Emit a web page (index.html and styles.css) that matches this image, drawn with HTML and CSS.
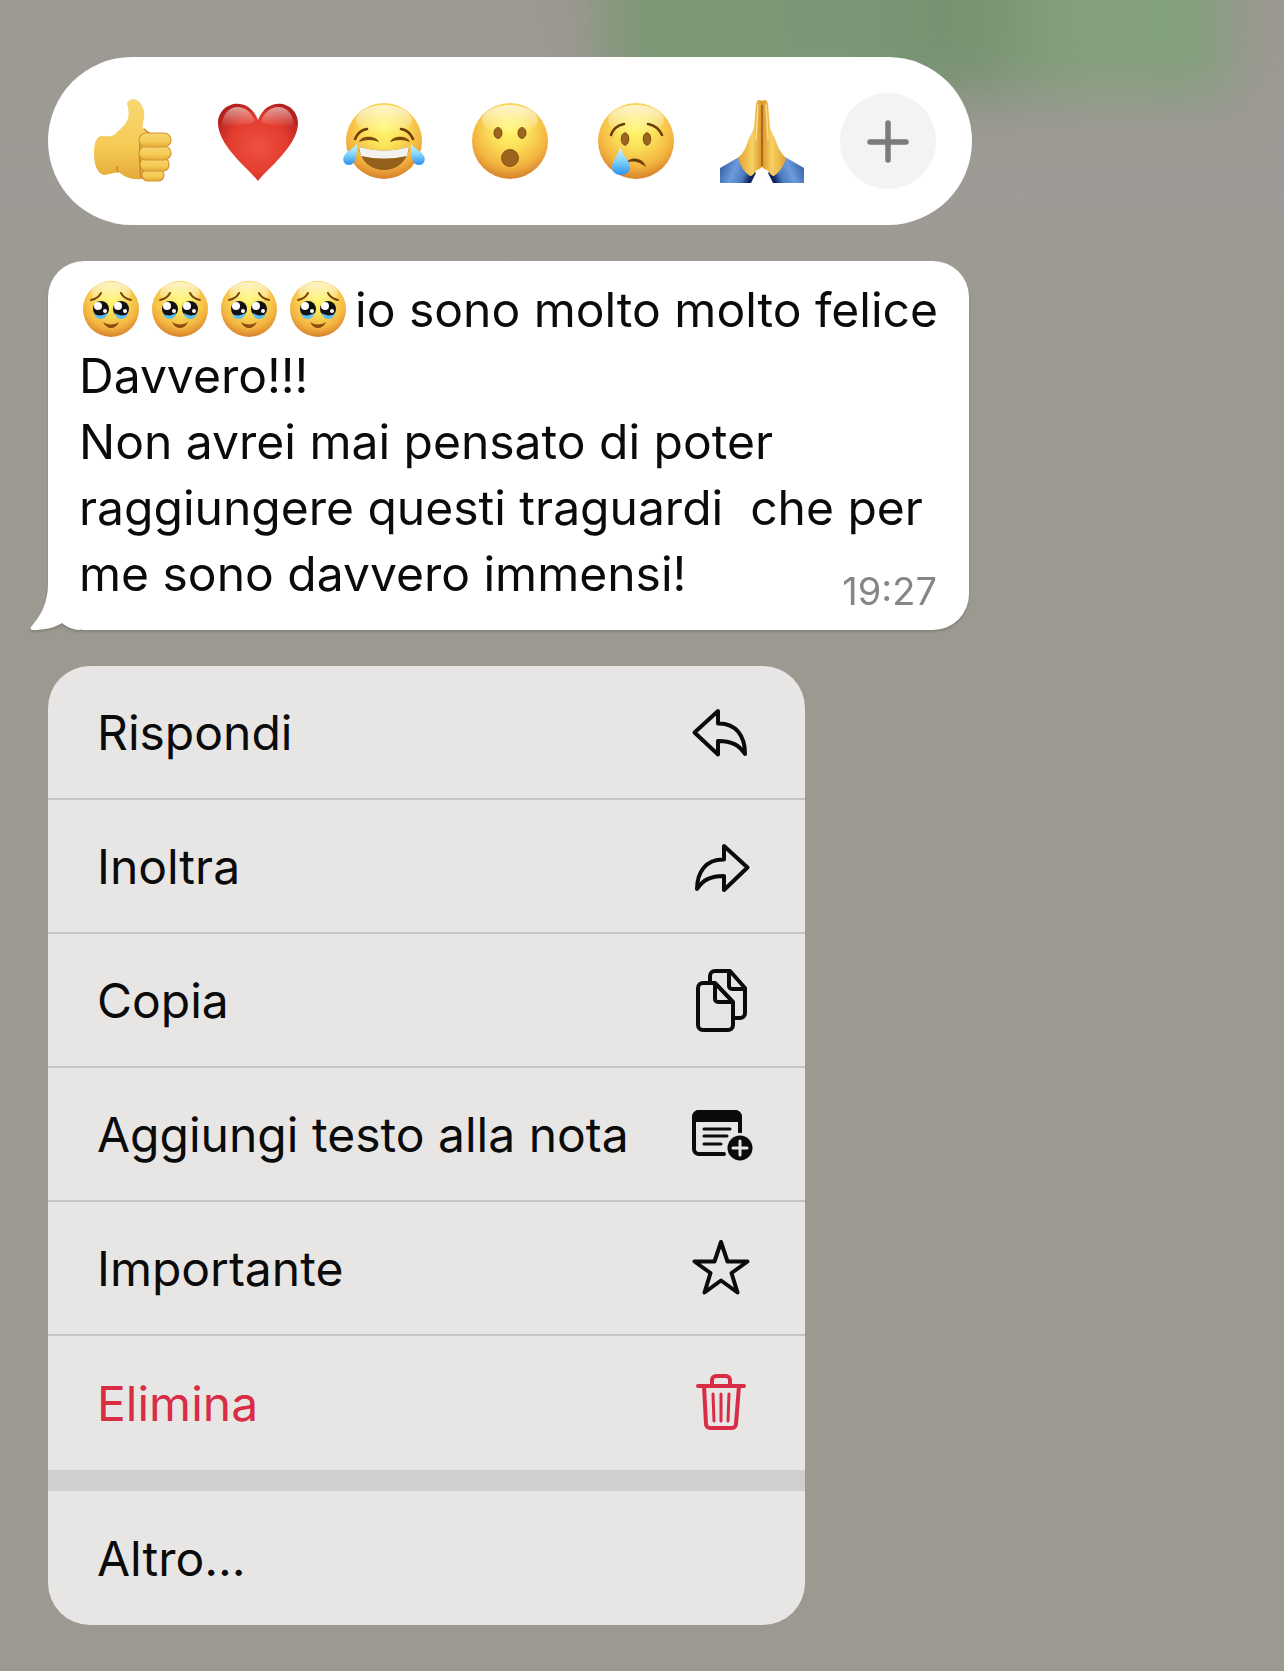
FILE: index.html
```
<!DOCTYPE html>
<html lang="it">
<head>
    <meta charset="UTF-8">
    <meta name="viewport" content="width=device-width, initial-scale=1.0">
    <title>Chat</title>
    <link rel="stylesheet" href="styles.css">
</head>
<body>
    <!-- shared gradients and the bubble emoji -->
    <svg class="defs" width="0" height="0" aria-hidden="true">
        <defs>
            <radialGradient id="face" cx="0.5" cy="0.33" r="0.68">
                <stop offset="0" stop-color="#fff76d"/>
                <stop offset="0.35" stop-color="#fbe35a"/>
                <stop offset="0.75" stop-color="#f3b340"/>
                <stop offset="1" stop-color="#d57f2a"/>
            </radialGradient>
            <linearGradient id="shine" x1="0" y1="0" x2="0" y2="1">
                <stop offset="0" stop-color="#fff" stop-opacity="0.7"/>
                <stop offset="1" stop-color="#fff" stop-opacity="0"/>
            </linearGradient>
            <linearGradient id="tear" x1="0" y1="0" x2="0" y2="1">
                <stop offset="0" stop-color="#d4f5fe"/>
                <stop offset="0.5" stop-color="#7fd3fb"/>
                <stop offset="1" stop-color="#2d8ff0"/>
            </linearGradient>
            <radialGradient id="heart" cx="0.5" cy="0.55" r="0.6">
                <stop offset="0" stop-color="#ee5140"/>
                <stop offset="0.6" stop-color="#e23c2e"/>
                <stop offset="1" stop-color="#b4201c"/>
            </radialGradient>
            <linearGradient id="skin" x1="0" y1="0" x2="0" y2="1">
                <stop offset="0" stop-color="#f8d673"/>
                <stop offset="0.6" stop-color="#f5cb55"/>
                <stop offset="1" stop-color="#e5a93a"/>
            </linearGradient>
            <linearGradient id="palm" x1="0" y1="0" x2="1" y2="0">
                <stop offset="0" stop-color="#e3a030"/>
                <stop offset="0.6" stop-color="#f8d164"/>
                <stop offset="1" stop-color="#d9942b"/>
            </linearGradient>
            <linearGradient id="sleeve" x1="0" y1="0" x2="1" y2="0.3">
                <stop offset="0" stop-color="#29539a"/>
                <stop offset="0.5" stop-color="#6c9bdc"/>
                <stop offset="0.8" stop-color="#4a78c0"/>
                <stop offset="1" stop-color="#10235f"/>
            </linearGradient>
            <symbol id="holding-tears" viewBox="0 0 69 62">
                <circle cx="32" cy="31" r="28" fill="url(#face)"/>
                <ellipse cx="32" cy="15" rx="20" ry="11" fill="url(#shine)"/>
                <path d="M12 22c5-1 8-3 10-7M52 22c-5-1-8-3-10-7" fill="none" stroke="#7a420f" stroke-width="2" stroke-linecap="round"/>
                <circle cx="22" cy="31" r="8" fill="#111"/>
                <circle cx="42" cy="31" r="8" fill="#111"/>
                <path d="M15 36c4 2 9 2 13-1 0 3-3 6-6 6s-6-2-7-5zM49 36c-4 2-9 2-13-1 0 3 3 6 6 6s6-2 7-5z" fill="#5cbcf4"/>
                <circle cx="19" cy="28" r="4" fill="#fff"/>
                <circle cx="39" cy="28" r="4" fill="#fff"/>
                <circle cx="26" cy="33" r="2" fill="#fff"/>
                <circle cx="46" cy="33" r="2" fill="#fff"/>
                <path d="M24 44q8 5 16 0q-3 6-8 6t-8-6z" fill="#8d4c10"/>
            </symbol>
        </defs>
    </svg>

    <div class="backdrop" aria-hidden="true"><div class="backdrop-bubble"></div></div>

    <main class="overlay">
        <div class="reactions">
            <button class="reaction" aria-label="Pollice in su">
                <svg viewBox="0 0 96 96">
                    <path d="M43 11C44 6 50 5 54 8c5 4 7 10 6 17-1 5-2 8-1 11 3 4 8 4 13 4l7 44-22 2c-9 1-17-2-22-7l-15 3C13 80 10 72 10 60c0-9 2-16 7-17 5 0 10 1 13-1 4-4 8-7 11-11 5-6 4-13 2-20z" fill="url(#skin)"/>
                    <path d="M34 79q-1-2-1-5M60 36l5 4M57 85q-2-14-1-38" fill="none" stroke="#cb8828" stroke-width="1.6" stroke-linecap="round"/>
                    <g fill="url(#skin)" stroke="#d5952f" stroke-width="1.2">
                        <rect x="58" y="76" width="22" height="12" rx="6"/>
                        <rect x="56" y="65" width="29" height="13" rx="6"/>
                        <rect x="55" y="53" width="32" height="14" rx="7"/>
                        <rect x="55" y="40" width="32" height="14" rx="7"/>
                    </g>
                </svg>
            </button>
            <button class="reaction" aria-label="Cuore rosso">
                <svg viewBox="0 0 96 96">
                    <path d="M48 88C40 77 8 53 8 30 8 9 38 1 48 27 58 1 88 9 88 30 88 53 56 77 48 88z" fill="url(#heart)"/>
                    <path d="M12 34C12 9 38 8 45 28 42 33 22 32 12 34zM84 34C84 9 58 8 51 28 54 33 74 32 84 34z" fill="url(#shine)" opacity="0.8"/>
                </svg>
            </button>
            <button class="reaction" aria-label="Lacrime di gioia">
                <svg viewBox="0 0 96 96">
                    <circle cx="48" cy="48" r="38" fill="url(#face)"/>
                    <ellipse cx="48" cy="27" rx="28" ry="15" fill="url(#shine)"/>
                    <path d="M19 46q4-9 12-10M77 46q-4-9-12-10" fill="none" stroke="#6b3b08" stroke-width="2.6" stroke-linecap="round"/>
                    <path d="M23 49c2-7 17-7 20 0q-10-4-20 0zM54 49c3-7 17-7 20 0q-10-4-20 0z" fill="#7e480c"/>
                    <path d="M23 54q25 7 50 0c-1 13-11 23-25 23S24 67 23 54z" fill="#95601b"/>
                    <path d="M23 54q25 7 50 0l-2 9q-23 5-46 0z" fill="#f3f2ee"/>
                    <path d="M21 51c0 8 0 21-8 21-5 0-7-5-5-9 3-5 9-7 13-12zM75 51c0 8 0 21 8 21 5 0 7-5 5-9-3-5-9-7-13-12z" fill="url(#tear)"/>
                </svg>
            </button>
            <button class="reaction" aria-label="Sorpresa">
                <svg viewBox="0 0 96 96">
                    <circle cx="48" cy="48" r="38" fill="url(#face)"/>
                    <ellipse cx="48" cy="27" rx="28" ry="15" fill="url(#shine)"/>
                    <g fill="#9b651f" stroke="#814c10" stroke-width="1">
                        <ellipse cx="36" cy="40" rx="4" ry="5.4"/>
                        <ellipse cx="60" cy="40" rx="4" ry="5.4"/>
                        <circle cx="48" cy="65" r="8.4"/>
                    </g>
                </svg>
            </button>
            <button class="reaction" aria-label="Pianto">
                <svg viewBox="0 0 96 96">
                    <circle cx="48" cy="48" r="38" fill="url(#face)"/>
                    <ellipse cx="48" cy="27" rx="28" ry="15" fill="url(#shine)"/>
                    <path d="M23 42q3-9 13-11M74 42q-4-9-14-11" fill="none" stroke="#6b3b08" stroke-width="2.6" stroke-linecap="round"/>
                    <g fill="#9b651f" stroke="#814c10" stroke-width="1">
                        <ellipse cx="37" cy="46" rx="3.8" ry="6.2"/>
                        <ellipse cx="59" cy="46" rx="3.8" ry="6.2"/>
                    </g>
                    <path d="M38 70c4-7 17-6 20 4-6-5-13-7-20-4z" fill="#6b3b08"/>
                    <path d="M32 54c3 9 10 14 10 20 0 5-4 8-9 8s-9-3-9-8c0-6 6-11 8-20z" fill="url(#tear)"/>
                </svg>
            </button>
            <button class="reaction" aria-label="Mani giunte">
                <svg viewBox="0 0 96 96">
                    <path d="M6 75l19-11 17 16-5 10H6z" fill="url(#sleeve)"/>
                    <path d="M6 75l19-11 17 16-5 10H6z" transform="matrix(-1 0 0 1 96 0)" fill="url(#sleeve)"/>
                    <path d="M48 8q-5-3-6 3l-2 23c-1 5-5 10-7 17-2 6-5 10-9 14 2 7 6 14 12 18 2 0 4-2 5-4 2-3 7-3 7-6z" fill="url(#palm)"/>
                    <path d="M48 8q-5-3-6 3l-2 23c-1 5-5 10-7 17-2 6-5 10-9 14 2 7 6 14 12 18 2 0 4-2 5-4 2-3 7-3 7-6z" transform="matrix(-1 0 0 1 96 0)" fill="url(#palm)"/>
                    <path d="M48 12v61" stroke="#a65a17" stroke-width="1.6"/>
                    <path d="M44 12l-2 34M52 12l2 34" stroke="#fbe08a" stroke-width="1.4" stroke-linecap="round"/>
                </svg>
            </button>
            <button class="reaction reaction-more" aria-label="Altre reazioni">
                <svg viewBox="0 0 96 96"><path d="M48 30v37M30 49h36" fill="none" stroke="#7a7b7c" stroke-width="5.5" stroke-linecap="round"/></svg>
            </button>
        </div>

        <article class="bubble">
            <p class="message"><svg class="emoji" role="img" aria-label="🥹"><use href="#holding-tears"/></svg><svg class="emoji" role="img" aria-label="🥹"><use href="#holding-tears"/></svg><svg class="emoji" role="img" aria-label="🥹"><use href="#holding-tears"/></svg><svg class="emoji" role="img" aria-label="🥹"><use href="#holding-tears"/></svg>io sono molto molto felice
Davvero!!!
Non avrei mai pensato di poter
raggiungere questi traguardi  che per
<span>me sono davvero immensi!</span><time class="time">19:27</time></p>
            <svg class="tail" viewBox="0 0 50 46" aria-hidden="true"><path d="M18 0C18 19 11 31 1 43c-1 2 0 3 2 3 11 0 21-2 29-7 5 4 11 7 18 7V0z" fill="#fff"/></svg>
        </article>

        <nav class="menu">
            <button class="menu-item">Rispondi
                <svg class="icon" viewBox="0 0 64 64"><path d="M29 11v12.500C47 23 56 36 56 54 50 45 43 41 29 41v13.500L5.500 32.500z"/></svg>
            </button>
            <button class="menu-item">Inoltra
                <svg class="icon" viewBox="0 0 64 64"><path d="M35 12v13.500C17 25 8 38 8 55 14 46 21 42 35 42v14l23.500-22.500z"/></svg>
            </button>
            <button class="menu-item">Copia
                <svg class="icon" viewBox="0 0 64 64">
                    <path d="M26 15H14a5 5 0 0 0-5 5v37a5 5 0 0 0 5 5h25a5 5 0 0 0 5-5V34zM26 15v16a3 3 0 0 0 3 3h15"/>
                    <path d="M21 15V8a5 5 0 0 1 5-5h15l15 17v25a5 5 0 0 1-5 5h-6M40 3v15a3 3 0 0 0 3 3h13"/>
                </svg>
            </button>
            <button class="menu-item">Aggiungi testo alla nota
                <svg class="icon" viewBox="0 0 64 64">
                    <path d="M51 30V15a5 5 0 0 0-5-5H10a5 5 0 0 0-5 5v32a5 5 0 0 0 5 5h25"/>
                    <path class="fill" d="M3 20v-5a7 7 0 0 1 7-7h36a7 7 0 0 1 7 7v5z"/>
                    <path class="thin" d="M15 27h26M15 34h23M15 42h17"/>
                    <circle class="fill" cx="51" cy="46" r="12.500"/>
                    <path class="cut" d="M51 39v14M44 46h14"/>
                </svg>
            </button>
            <button class="menu-item">Importante
                <svg class="icon" viewBox="0 0 64 64"><path d="M32 6l6.500 19.500H58.500L42.500 37l6 19.500L32 44.500 15.500 56.500l6-19.500L5.500 25.500H25.500z"/></svg>
            </button>
            <button class="menu-item danger">Elimina
                <svg class="icon" viewBox="0 0 64 64">
                    <path d="M9 15h46M23 15v-6a4 4 0 0 1 4-4h10a4 4 0 0 1 4 4v6M15 15l2 38a4 4 0 0 0 4 4h22a4 4 0 0 0 4-4l3-38"/>
                    <path class="thin" d="M24 23l1 27M32 23v27M40 23l-1 27"/>
                </svg>
            </button>
            <button class="menu-item last">Altro...</button>
        </nav>
    </main>
</body>
</html>
```

FILE: styles.css
```
:root {
    --background-color: #9c9991;
    --menu-color: #e7e6e4;
    --line-color: #c5c4c2;
    --band-color: #d0cfcd;
    --text-color: #0b0b0b;
    --danger-color: #d92c45;
}

* {
    margin: 0;
    padding: 0;
    box-sizing: border-box;
}

body {
    background-color: var(--background-color);
    min-height: 100vh;
    color: var(--text-color);
    font-family: Inter, "Liberation Sans", sans-serif;
    font-size: 48px;
}

.defs {
    position: absolute;
}

/* blurred chat behind the overlay */
.backdrop {
    position: absolute;
    inset: 0;
    overflow: hidden;
    background: linear-gradient(180deg, #9d9892 0, #9e9b96 200px, #9c9991 320px);
}

.backdrop-bubble {
    position: absolute;
    top: -80px;
    right: 52px;
    width: 630px;
    height: 176px;
    background: linear-gradient(90deg, #7d9876 0, #7b9676 40%, #769070 56%, #84a07d 74%, #83a07d 100%);
    filter: blur(26px);
}

.overlay {
    position: relative;
    display: flex;
    flex-direction: column;
    align-items: flex-start;
    padding: 57px 48px 46px;
}

button {
    border: none;
    background: none;
    color: inherit;
    font: inherit;
    cursor: pointer;
}

.reactions {
    display: flex;
    gap: 30px;
    padding: 36px;
    margin-bottom: 36px;
    background: #fff;
    border-radius: 84px;
}

.reaction {
    width: 96px;
    height: 96px;
}

.reaction svg {
    display: block;
    width: 100%;
}

.reaction-more {
    background: #f3f3f3;
    border-radius: 50%;
}

.bubble {
    position: relative;
    width: 100%;
    max-width: 921px;
    padding: 16px 16px 20px 31px;
    margin-bottom: 36px;
    background: #fff;
    border-radius: 36px;
    filter: drop-shadow(0 2px 1px rgba(0, 0, 0, 0.15));
}

.message {
    line-height: 66px;
    white-space: pre-wrap;
}

.emoji {
    width: 69px;
    height: 62px;
    margin: -8px 0;
    vertical-align: -5px;
}

.time {
    float: right;
    margin: 31px 16px 0 0;
    color: #868686;
    font-size: 38px;
    line-height: 38px;
}

.tail {
    position: absolute;
    left: -18px;
    bottom: 0;
    width: 50px;
    height: 46px;
}

.menu {
    width: 100%;
    max-width: 757px;
    background: var(--menu-color);
    border-radius: 42px;
    overflow: hidden;
}

.menu-item {
    display: flex;
    align-items: center;
    justify-content: space-between;
    width: 100%;
    height: 134px;
    padding: 0 52px 0 49px;
    border-bottom: 2px solid var(--line-color);
    text-align: left;
}

.menu-item.danger {
    height: 155px;
    border-bottom: 21px solid var(--band-color);
    color: var(--danger-color);
}

.menu-item.last {
    border-bottom: none;
}

.icon {
    flex: none;
    width: 64px;
    height: 64px;
    fill: none;
    stroke: currentColor;
    stroke-width: 4;
    stroke-linecap: round;
    stroke-linejoin: round;
}

.icon .fill {
    fill: currentColor;
    stroke: none;
}

.icon circle.fill {
    stroke: var(--menu-color);
    stroke-width: 5;
    paint-order: stroke;
}

.icon .thin {
    stroke-width: 3;
}

.icon .cut {
    stroke: var(--menu-color);
    stroke-width: 3;
}
```
